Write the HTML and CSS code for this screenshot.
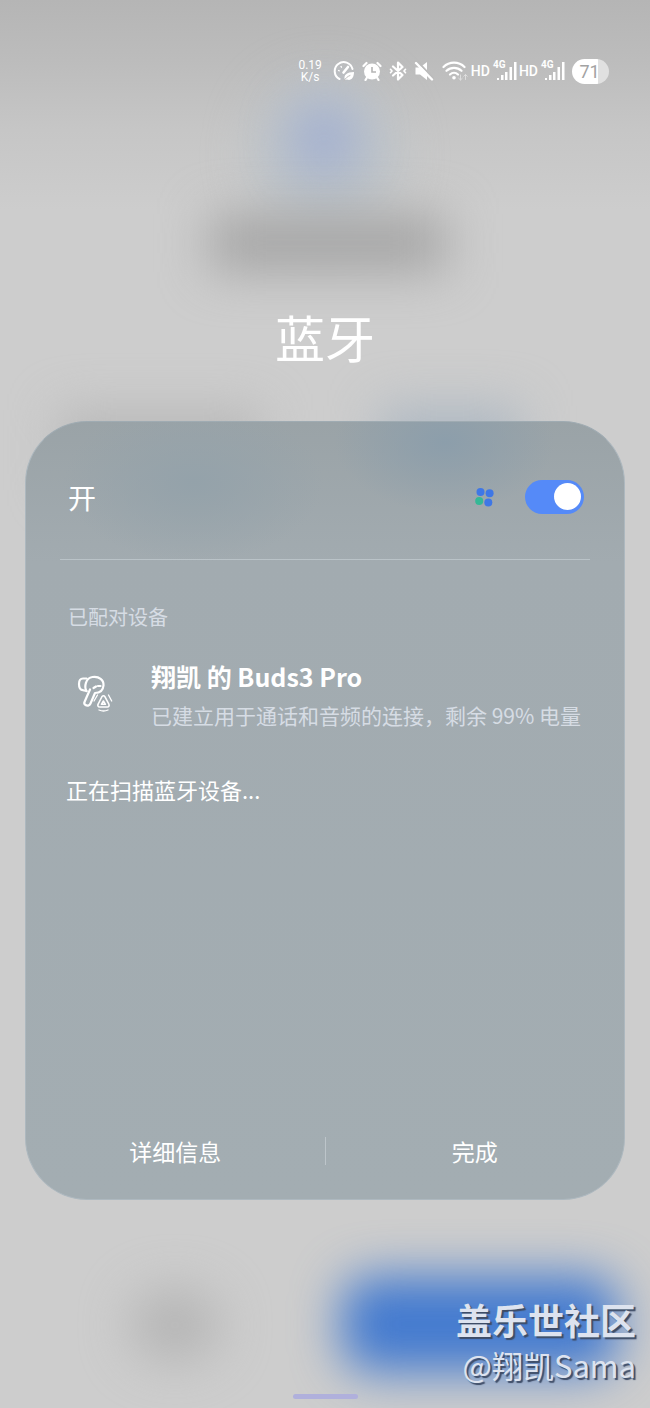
FILE: index.html
```html
<!DOCTYPE html>
<html lang="zh-CN">
<head>
<meta charset="utf-8">
<meta name="viewport" content="width=device-width, initial-scale=1">
<title>蓝牙</title>
<link rel="stylesheet" href="styles.css">
</head>
<body>
<div class="screen">
  <div class="backdrop" aria-hidden="true">
    <span class="glow glow-halo"></span>
    <span class="glow glow-icon"></span>
    <span class="glow glow-heading"></span>
    <span class="glow glow-left"></span>
    <span class="glow glow-right"></span>
    <span class="glow glow-cancel"></span>
    <span class="glow glow-action"></span>
  </div>

  <header class="status">
    <div class="speed"><span>0.19</span><span>K/s</span></div>
    <svg class="ico ico-gauge" viewBox="0 0 22 22" width="22" height="22" fill="none" stroke="#fff" stroke-width="2" stroke-linecap="round">
      <path d="M6.500 19A9 9 0 1 1 19.500 9"/>
      <path d="M10.500 12.500L15 7" stroke-width="2.600"/>
      <path d="M5.500 10.500l.8.300M8 6.500l.5.700" stroke-width="1.300"/>
      <path d="M12 20c-2-5 2-8 9-8 0 6-3 9-7 7.500z" fill="#fff" stroke="none"/>
      <path d="M11 21c1.500-3 3.500-4.500 6-5.500" stroke="#bbb" stroke-width="1"/>
    </svg>
    <svg class="ico ico-alarm" viewBox="0 0 20 20" width="20" height="20">
      <circle cx="10" cy="10.500" r="8" fill="#fff"/>
      <path d="M1.500 5L4.500 2M18.500 5L15.500 2M5 16.500L3.500 19M15 16.500l1.500 2.500" stroke="#fff" stroke-width="2.200" stroke-linecap="round"/>
      <path d="M10 6v5h4" fill="none" stroke="#b5b5b5" stroke-width="1.600"/>
    </svg>
    <svg class="ico ico-bt" viewBox="0 0 18 20" width="18" height="20" fill="none" stroke="#fff" stroke-width="2.200" stroke-linejoin="round" stroke-linecap="round">
      <path d="M4 5.500l9.500 8.500L9 18.500v-17L13.500 6 4 14.500"/>
      <path d="M1.500 8.300l1.500 1.700-1.500 1.700M16.500 8.300L15 10l1.500 1.700" stroke-width="1.700"/>
    </svg>
    <svg class="ico ico-mute" viewBox="0 0 20 20" width="20" height="20">
      <path d="M1.500 6.500H6l7-5.500v18L6 13.500H1.500z" fill="#fff"/>
      <path d="M3 0l17 18" stroke="#bbb" stroke-width="2"/>
      <path d="M2 2l16 16.500" stroke="#fff" stroke-width="2.400" stroke-linecap="round"/>
    </svg>
    <svg class="ico ico-wifi" viewBox="0 0 27 22" width="27" height="22" fill="none" stroke="#fff" stroke-width="2.200" stroke-linecap="round">
      <path d="M1.500 7a15 15 0 0 1 21 0M4.500 10.800a11 11 0 0 1 15 0M8 14.500a6 6 0 0 1 8 0"/>
      <circle cx="12" cy="17.800" r="1.800" fill="#fff" stroke="none"/>
      <path d="M18.500 15v5m-1.800-1.700l1.800 1.700 1.800-1.700M23.500 19.500v-5m-1.800 1.700l1.800-1.700 1.800 1.700" stroke="#dedede" stroke-width="1"/>
    </svg>
    <span class="hd">HD</span>
    <span class="signal"><b>4G</b>
      <svg viewBox="0 0 20 20" width="20" height="20" fill="#fff"><path d="M0 17h2v2H0zM4 14h2.500v5H4zM8 11h2.500v8H8zM12.500 6H15v13h-2.500zM17 1h2.500v18H17z"/></svg>
    </span>
    <span class="hd">HD</span>
    <span class="signal"><b>4G</b>
      <svg viewBox="0 0 20 20" width="20" height="20" fill="#fff"><path d="M0 17h2v2H0zM4 14h2.500v5H4zM8 11h2.500v8H8zM12.500 6H15v13h-2.500zM17 1h2.500v18H17z"/></svg>
    </span>
    <span class="battery">71</span>
  </header>

  <h1 class="title">蓝牙</h1>

  <main class="card">
    <div class="body">
      <div class="power">
        <label class="power-label" for="bt">开</label>
        <svg class="dots" viewBox="0 0 20 20" width="20" height="20">
          <circle cx="5.500" cy="5" r="4" fill="#3f77e6"/>
          <circle cx="14.600" cy="6.300" r="4" fill="#3f77e6"/>
          <circle cx="4.200" cy="14" r="4" fill="#35b896"/>
          <circle cx="13.300" cy="15.500" r="4" fill="#3f77e6"/>
        </svg>
        <input class="switch" id="bt" type="checkbox" role="switch" checked>
      </div>

      <h2 class="section">已配对设备</h2>
      <div class="device">
        <svg class="buds" viewBox="0 0 36 40" width="36" height="40" fill="none" stroke="#fff" stroke-width="2.200" stroke-linecap="round" stroke-linejoin="round">
          <path d="M9.500 4.500H6C3 4.500 2 7 2 10s1 6 4 6.200L9.500 17"/>
          <path d="M9.500 17C7 13 8.500 4 15.500 3 22 2 27 6 26.500 11.500 26 17 22 19 18 19L13.500 29.500c-1 2.500-3.500 2.500-5 1.500-1.500-.8-1.500-2-.8-3.500L13 15.500"/>
          <path d="M16.500 14l2.500-1.500M21 12h2.500"/>
          <g stroke-width="1.600">
            <path d="M25 22.500c1-1 2-1 3 .3l3.800 7.200c.8 1.500 0 3-1.500 3h-7.600c-1.500 0-2.500-1.500-1.500-3z"/>
            <path d="M26.400 27l2 3.300h-4z"/>
            <path d="M20.500 21l-3.500 6M31.500 21l3.200 6M22 36c3 1.300 6 1.300 9 0" stroke-width="1.300"/>
          </g>
        </svg>
        <div class="info">
          <p class="name">翔凯 的 Buds3 Pro</p>
          <p class="detail">已建立用于通话和音频的连接，剩余 99% 电量</p>
        </div>
      </div>
      <p class="scan">正在扫描蓝牙设备...</p>
    </div>

    <div class="actions">
      <button type="button">详细信息</button>
      <span class="split"></span>
      <button type="button">完成</button>
    </div>
  </main>

  <footer class="footer">
    <p class="site">盖乐世社区</p>
    <p class="author">@翔凯Sama</p>
    <span class="handle"></span>
  </footer>
</div>
</body>
</html>
```
FILE: styles.css
```css
* {
  box-sizing: border-box;
}

body,
h1,
h2,
p {
  margin: 0;
  font-weight: 400;
}

body {
  font-family: "Noto Sans CJK SC", "Noto Sans", sans-serif;
  color: #fff;
}

.screen {
  position: relative;
  display: flex;
  flex-direction: column;
  min-height: 100vh;
  overflow: hidden;
  background: linear-gradient(#b5b5b5 0, #bcbcbc 60px, #c6c6c6 130px, #cdcdcd 210px);
}

/* Blurred shapes of the app behind the dialog */
.backdrop {
  position: absolute;
  inset: 0;
}

.glow {
  position: absolute;
  filter: blur(24px);
}

.glow-halo {
  top: 80px;
  left: calc(50% - 70px);
  width: 140px;
  height: 150px;
  border-radius: 50%;
  background: #bcc3c9;
}

.glow-icon {
  top: 102px;
  left: calc(50% - 34px);
  width: 66px;
  height: 74px;
  border-radius: 50%;
  background: #a3b0d0;
}

.glow-heading {
  top: 214px;
  left: calc(50% - 115px);
  width: 236px;
  height: 58px;
  background: #a6a6a6;
}

.glow-left {
  top: 410px;
  left: 60px;
  width: 200px;
  height: 80px;
  background: #b8b8b8;
}

.glow-right {
  top: 406px;
  right: 130px;
  width: 140px;
  height: 80px;
  background: #aeb8c2;
}

.glow-cancel {
  bottom: 46px;
  left: 130px;
  width: 90px;
  height: 74px;
  border-radius: 50%;
  background: #b5b5b5;
}

.glow-action {
  right: 32px;
  bottom: 36px;
  width: 276px;
  height: 96px;
  border-radius: 30px;
  background: #437acf;
}

.status {
  position: relative;
  display: flex;
  align-items: center;
  justify-content: flex-end;
  height: 32px;
  margin-top: 55px;
  padding-right: 41px;
  font-family: Roboto, sans-serif;
}

.speed {
  display: flex;
  flex-direction: column;
  align-items: center;
  margin-right: 11px;
  font-size: 12px;
  line-height: 12px;
}

.ico-gauge,
.ico-alarm,
.ico-bt {
  margin-right: 7px;
}

.ico-mute {
  margin-right: 8px;
}

.ico-wifi {
  margin-right: 2px;
}

.hd {
  margin-right: 3px;
  font-size: 14px;
  font-weight: 500;
}

.signal {
  position: relative;
  display: flex;
  justify-content: flex-end;
  width: 24px;
  margin-right: 2px;
}

.signal b {
  position: absolute;
  top: -1px;
  left: 0;
  font-size: 10px;
  line-height: 10px;
}

.battery {
  width: 37px;
  height: 25px;
  margin-left: 5px;
  padding-right: 2px;
  border-radius: 13px;
  background: linear-gradient(90deg, #fff 71%, #e0e0e0 71%);
  color: #a3a3a3;
  font-size: 18px;
  line-height: 25px;
  text-align: center;
}

.title {
  position: relative;
  margin: 219px 0 55px;
  font-size: 50px;
  line-height: 60px;
  text-align: center;
}

.card {
  position: relative;
  display: flex;
  flex: 1;
  flex-direction: column;
  justify-content: space-between;
  margin: 0 25px;
  padding: 14px 0 18px;
  border: 1px solid #adb8bf;
  border-top-color: #9fabb2;
  border-radius: 62px;
  background:
    radial-gradient(110px 70px at 70% 20px, #8c9eab, transparent),
    radial-gradient(130px 80px at 28% 60px, #94a2aa, transparent),
    linear-gradient(#9aa3a7, #a2abb0 140px, #a3adb2);
}

.body {
  padding: 0 34px;
}

.power {
  display: flex;
  align-items: center;
  height: 124px;
  padding: 0 6px 2px 8px;
  border-bottom: 1px solid #bac3c8;
}

.power-label {
  flex: 1;
  font-size: 28px;
}

.dots {
  margin-right: 30px;
}

.switch {
  display: flex;
  align-items: center;
  justify-content: flex-end;
  width: 59px;
  height: 34px;
  margin: 0;
  padding-right: 3px;
  border-radius: 17px;
  background: #558af8;
  appearance: none;
}

.switch::before {
  width: 27px;
  height: 27px;
  border-radius: 50%;
  background: #fff;
  content: "";
}

.switch:not(:checked) {
  justify-content: flex-start;
  padding-left: 3px;
  background: #88929a;
}

.section {
  margin: 42px 8px 26px;
  color: #d6dce4;
  font-size: 20px;
  line-height: 30px;
}

.device {
  display: flex;
  align-items: center;
  gap: 38px;
  padding-left: 17px;
}

.buds {
  flex: none;
}

.name {
  font-size: 25px;
  font-weight: 700;
  line-height: 36px;
}

.detail {
  margin-top: 6px;
  color: #d6dce4;
  font-size: 21px;
  line-height: 30px;
}

.scan {
  margin: 44px 6px 0;
  font-size: 22px;
  line-height: 30px;
}

.actions {
  display: flex;
  align-items: center;
}

.actions button {
  flex: 1;
  height: 60px;
  padding: 0;
  border: 0;
  background: none;
  color: inherit;
  font: inherit;
  font-size: 23px;
}

.split {
  width: 1px;
  height: 28px;
  background: #bdc5ca;
}

.footer {
  position: relative;
  display: flex;
  flex-direction: column;
  align-items: flex-end;
  padding: 96px 14px 9px;
  color: #dde3ef;
  line-height: 46px;
  text-shadow: 2px 2px 1px #3e4c66;
}

.site {
  font-size: 36px;
  font-weight: 700;
}

.author {
  font-size: 31px;
}

.handle {
  align-self: center;
  width: 65px;
  height: 5px;
  margin-top: 6px;
  border-radius: 3px;
  background: #b0b0dc;
}
```
